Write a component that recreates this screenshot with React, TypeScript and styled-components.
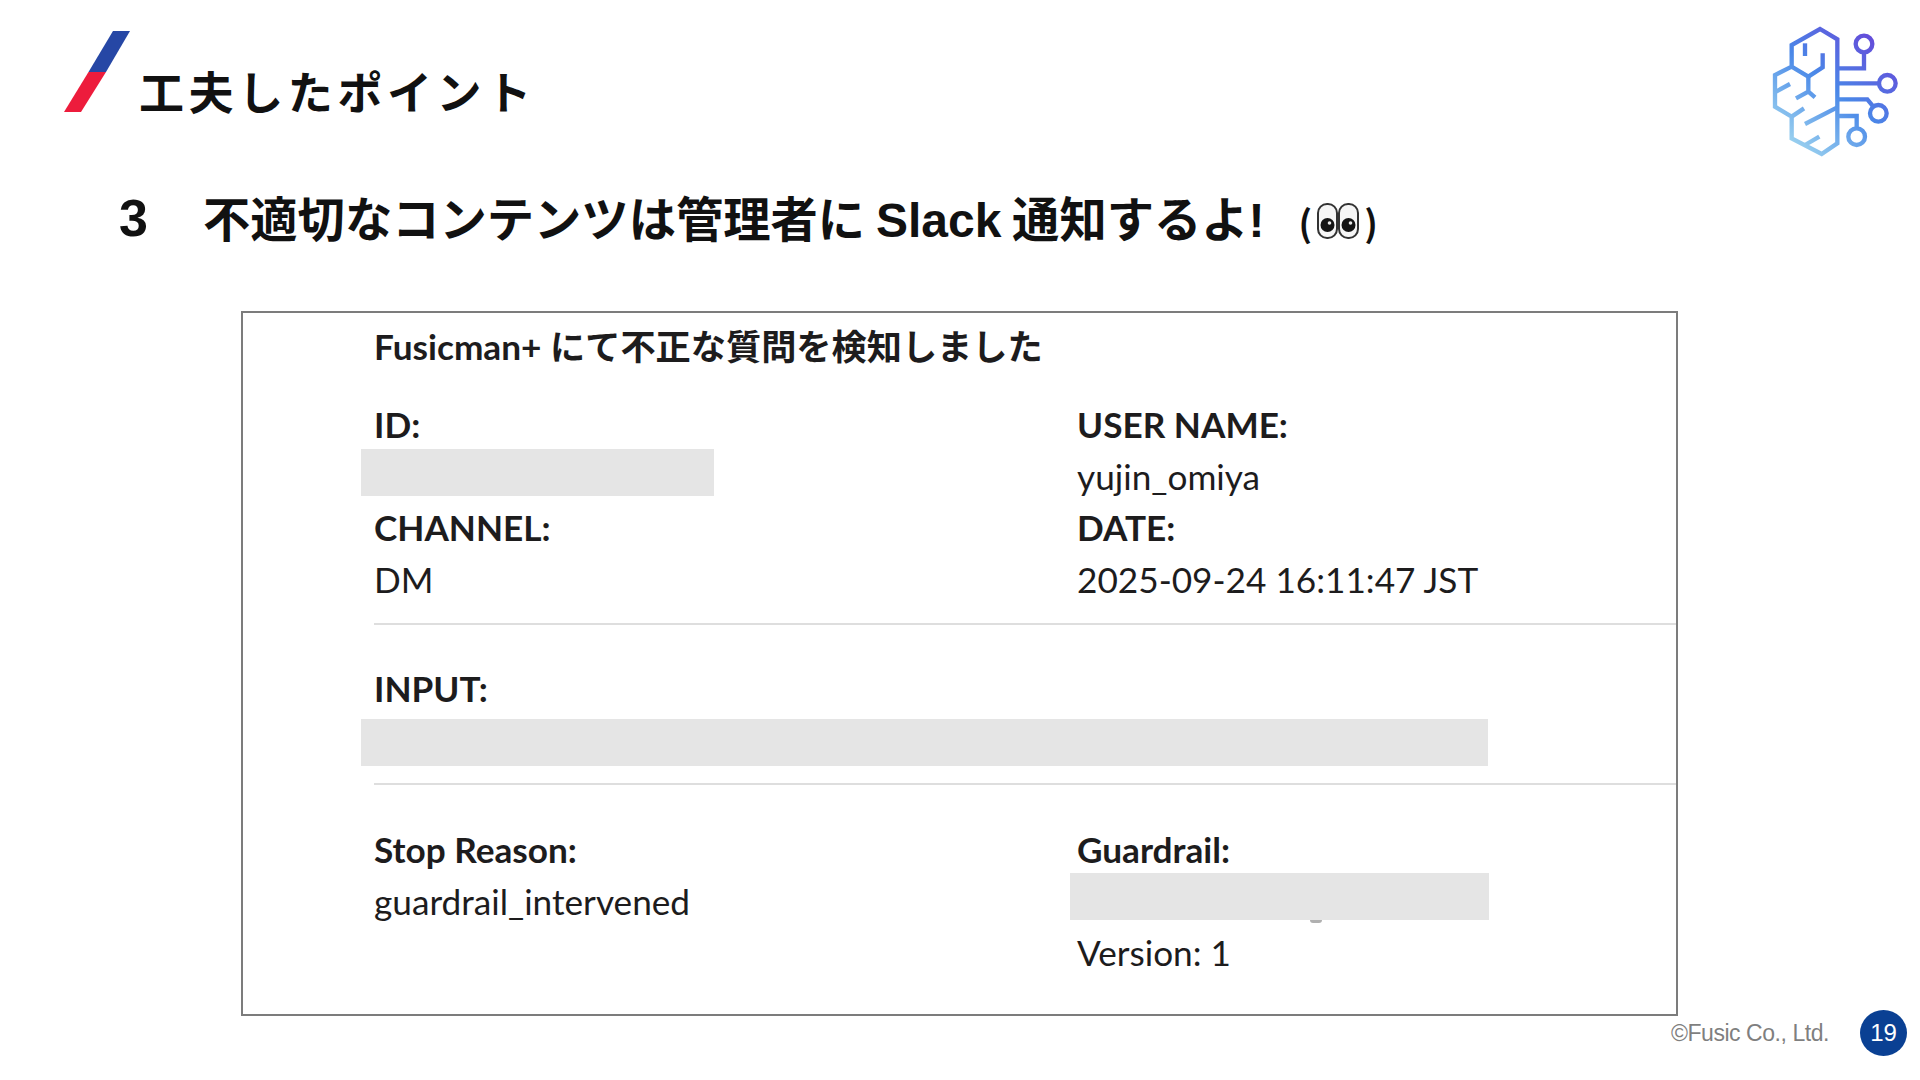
import React from "react";
import styled, { createGlobalStyle } from "styled-components";

const GlobalStyle = createGlobalStyle`
  html, body {
    margin: 0;
    padding: 0;
    background: #ffffff;
  }
`;

const Slide = styled.div`
  width: 1920px;
  height: 1080px;
  overflow: hidden;
  background: #ffffff;
  display: flex;
  flex-direction: column;
`;

const Header = styled.header`
  height: 170px;
  display: flex;
  align-items: flex-start;
  justify-content: space-between;
  padding-left: 64px;
`;

const TitleGroup = styled.div`
  display: flex;
  align-items: flex-start;
  padding-top: 31px;
`;

const Title = styled.h1`
  margin: 30px 0 0 9px;
  font-family: "Noto Sans CJK JP", "Noto Sans", sans-serif;
  font-size: 45px;
  line-height: 60px;
  font-weight: 700;
  letter-spacing: 4.6px;
  color: #111111;
`;

const LogoBox = styled.div`
  margin-top: 10px;
  width: 180px;
  height: 160px;
`;

const Subtitle = styled.h2`
  margin: 16px 0 0 119px;
  height: 60px;
  display: flex;
  align-items: center;
  font-family: "Noto Sans CJK JP", "Liberation Sans", sans-serif;
  font-size: 47.3px;
  font-weight: 700;
  color: #111111;
  white-space: pre;
`;

const Latin = styled.span`
  font-family: "Liberation Sans", Arial, sans-serif;
  font-size: 48px;
  font-weight: 700;
`;

const Number = styled.span`
  width: 84px;
  padding-top: 4px;
  font-family: "Liberation Sans", Arial, sans-serif;
  font-size: 52px;
`;

const Paren = styled.span`
  font-weight: 700;
  font-size: 36px;
  line-height: 1;
`;

const Reaction = styled.span`
  display: flex;
  align-items: center;
  gap: 5px;
  margin: 10px 0 0 34px;
`;

const Card = styled.section`
  box-sizing: border-box;
  margin: 65px 0 0 241px;
  width: 1437px;
  height: 705px;
  border: 2px solid #7c7c7c;
  padding: 7px 0 0 131px;
  font-family: Lato, "Noto Sans CJK JP", sans-serif;
  color: #1d1c1d;
`;

const CardTitle = styled.div`
  font-size: 35.2px;
  line-height: 52px;
  font-weight: 700;
`;

const Fields = styled.div<{ $top: number }>`
  display: grid;
  grid-template-columns: 703px 1fr;
  margin-top: ${({ $top }) => $top}px;
`;

const Field = styled.div`
  display: flex;
  flex-direction: column;
`;

const Label = styled.div`
  font-size: 35.2px;
  line-height: 51.5px;
  font-weight: 700;
`;

const Value = styled.div`
  font-size: 35.2px;
  line-height: 51.5px;
  font-weight: 400;
`;

const Redacted = styled.div<{ $width: number; $inset: number; $shift: number }>`
  position: relative;
  box-sizing: border-box;
  width: ${({ $width }) => $width}px;
  height: 47px;
  margin-top: ${({ $shift }) => 2 + $shift}px;
  margin-bottom: ${({ $shift }) => 2.5 - $shift}px;
  margin-left: -${({ $inset }) => $inset}px;
  background: #e5e5e5;
`;

const Speck = styled.span`
  position: absolute;
  left: 240px;
  bottom: -3px;
  width: 12px;
  height: 3px;
  border-radius: 0 0 6px 6px;
  background: #b0b0b0;
`;

const Divider = styled.hr<{ $top: number }>`
  margin: ${({ $top }) => $top}px 0 0 0;
  border: 0;
  height: 2px;
  background: #dedede;
`;

const Footer = styled.footer`
  margin-top: -6px;
  padding-right: 13px;
  display: flex;
  justify-content: flex-end;
  align-items: center;
  gap: 31px;
`;

const Copyright = styled.span`
  font-family: "Liberation Sans", Arial, sans-serif;
  font-size: 23px;
  letter-spacing: -0.45px;
  color: #7f7f7f;
`;

const PageBadge = styled.span`
  width: 47px;
  height: 46px;
  border-radius: 50%;
  background: #0a4093;
  color: #ffffff;
  display: flex;
  align-items: center;
  justify-content: center;
  font-family: "Liberation Sans", Arial, sans-serif;
  font-size: 24px;
`;

const Slash = () => (
  <svg width="66" height="81" viewBox="0 0 66 81" aria-hidden="true">
    <polygon points="49,0 66,0 42,41 24.5,41" fill="#2647a5" />
    <polygon points="24.5,41 42,41 17,81 0,81" fill="#ed1c3c" />
  </svg>
);

const BrainLogo = () => (
  <svg width="180" height="160" viewBox="0 0 540 480" aria-hidden="true">
    <defs>
      <linearGradient id="brain" gradientUnits="userSpaceOnUse" x1="440" y1="60" x2="130" y2="420">
        <stop offset="0" stopColor="#6a3fd6" />
        <stop offset="0.5" stopColor="#4a88e8" />
        <stop offset="1" stopColor="#a6dcf0" />
      </linearGradient>
    </defs>
    <g fill="none" stroke="url(#brain)" strokeWidth="13">
      <path d="M155 170V105L240 57L292 88V400L245 432L155 385V320L105 290V195L155 170L205 200L248 172V130" />
      <path d="M195 100V138" />
      <path d="M205 200V245M168 265L205 245L225 262" />
      <path d="M108 245L150 222" />
      <path d="M155 320L192 295" />
      <path d="M195 342L292 292" />
      <path d="M195 405L238 380" />
      <path d="M292 175H372V130" />
      <circle cx="372" cy="102" r="25" />
      <path d="M292 220H417" />
      <circle cx="442" cy="220" r="25" />
      <path d="M292 268H382L400 290" />
      <circle cx="415" cy="310" r="25" />
      <path d="M292 318H350V352" />
      <circle cx="350" cy="380" r="25" />
    </g>
  </svg>
);

const Eyes = () => (
  <svg width="42" height="36" viewBox="0 0 42 36" aria-hidden="true">
    <rect x="1" y="1" width="19" height="34" rx="9" fill="#f6f6f6" stroke="#333" strokeWidth="2" />
    <rect x="22" y="1" width="19" height="34" rx="9" fill="#f6f6f6" stroke="#333" strokeWidth="2" />
    <circle cx="10.5" cy="22" r="7" fill="#141414" />
    <circle cx="31.5" cy="22" r="7" fill="#141414" />
    <circle cx="12.5" cy="20" r="1.8" fill="#e8e8e8" />
    <circle cx="33.5" cy="20" r="1.8" fill="#e8e8e8" />
  </svg>
);

const App: React.FC = () => {
  return (
    <Slide>
      <GlobalStyle />
      <Header>
        <TitleGroup>
          <Slash />
          <Title>工夫したポイント</Title>
        </TitleGroup>
        <LogoBox>
          <BrainLogo />
        </LogoBox>
      </Header>

      <Subtitle>
        <Number>3</Number>
        <span>
          不適切なコンテンツは管理者に <Latin>Slack</Latin> 通知するよ<Latin>!</Latin>
        </span>
        <Reaction>
          <Paren>(</Paren>
          <Eyes />
          <Paren>)</Paren>
        </Reaction>
      </Subtitle>

      <Card>
        <CardTitle>Fusicman+ にて不正な質問を検知しました</CardTitle>
        <Fields $top={27}>
          <Field>
            <Label>ID:</Label>
            <Redacted $width={353} $inset={13} $shift={-3.5} />
            <Label>CHANNEL:</Label>
            <Value>DM</Value>
          </Field>
          <Field>
            <Label>USER NAME:</Label>
            <Value>yujin_omiya</Value>
            <Label>DATE:</Label>
            <Value>2025-09-24 16:11:47 JST</Value>
          </Field>
        </Fields>
        <Divider $top={18} />
        <Fields $top={38}>
          <Field>
            <Label>INPUT:</Label>
            <Redacted $width={1127} $inset={13} $shift={2.5} />
          </Field>
        </Fields>
        <Divider $top={17} />
        <Fields $top={39}>
          <Field>
            <Label>Stop Reason:</Label>
            <Value>guardrail_intervened</Value>
          </Field>
          <Field>
            <Label>Guardrail:</Label>
            <Redacted $width={419} $inset={7} $shift={-5}>
              <Speck />
            </Redacted>
            <Value>Version: 1</Value>
          </Field>
        </Fields>
      </Card>

      <Footer>
        <Copyright>©Fusic Co., Ltd.</Copyright>
        <PageBadge>19</PageBadge>
      </Footer>
    </Slide>
  );
};

export default App;
